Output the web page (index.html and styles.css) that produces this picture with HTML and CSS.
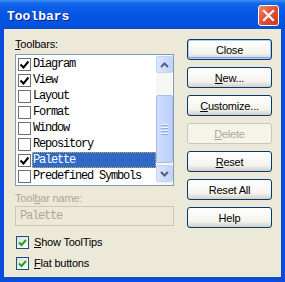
FILE: index.html
```html
<!DOCTYPE html>
<html lang="en">
<head>
  <meta charset="UTF-8" />
  <title>Toolbars</title>
  <link rel="stylesheet" href="styles.css">
</head>
<body>

<div class="window">
  <div class="titlebar">
    <span class="title">Toolbars</span>
    <button class="close-x" aria-label="Close">
      <svg width="13" height="13" viewBox="0 0 13 13"><path d="M2 2 L11 11 M11 2 L2 11" stroke="#fff" stroke-width="2.2" stroke-linecap="square"/></svg>
    </button>
  </div>

  <div class="body">
    <div class="left">
      <div class="label"><u>T</u>oolbars:</div>
      <div class="list">
        <ul class="items">
          <li><span class="box on"></span><span class="name">Diagram</span></li>
          <li><span class="box on"></span><span class="name">View</span></li>
          <li><span class="box"></span><span class="name">Layout</span></li>
          <li><span class="box"></span><span class="name">Format</span></li>
          <li><span class="box"></span><span class="name">Window</span></li>
          <li><span class="box"></span><span class="name">Repository</span></li>
          <li class="selected"><span class="box on"></span><span class="name">Palette</span></li>
          <li><span class="box"></span><span class="name">Predefined Symbols</span></li>
        </ul>
        <div class="scrollbar">
          <div class="arrow">
            <svg width="9" height="6" viewBox="0 0 9 6"><path d="M1 5 L4.5 1.5 L8 5" fill="none" stroke="#4d6185" stroke-width="2"/></svg>
          </div>
          <div class="track">
            <div class="thumb"><span></span><span></span><span></span><span></span></div>
          </div>
          <div class="arrow">
            <svg width="9" height="6" viewBox="0 0 9 6"><path d="M1 1 L4.5 4.5 L8 1" fill="none" stroke="#4d6185" stroke-width="2"/></svg>
          </div>
        </div>
      </div>

      <div class="label disabled">Tool<u>b</u>ar name:</div>
      <div class="namebox">Palette</div>

      <label class="check"><span class="xpbox"></span><span><u>S</u>how ToolTips</span></label>
      <label class="check"><span class="xpbox"></span><span><u>F</u>lat buttons</span></label>
    </div>

    <div class="right">
      <button class="btn default">Close</button>
      <button class="btn"><u>N</u>ew...</button>
      <button class="btn"><u>C</u>ustomize...</button>
      <button class="btn" disabled><u>D</u>elete</button>
      <button class="btn"><u>R</u>eset</button>
      <button class="btn">Reset All</button>
      <button class="btn">Help</button>
    </div>
  </div>
</div>

</body>
</html>
```

FILE: styles.css
```css
body {
  margin: 0;
  font-family: "Liberation Sans", Arial, sans-serif;
  font-size: 11px;
  letter-spacing: -0.2px;
}
.window {
  width: 285px;
  height: 282px;
  background: #0a4dd8;
  padding: 0 4px 5px 4px;
  box-sizing: border-box;
  display: flex;
  flex-direction: column;
}
.titlebar {
  height: 29px;
  margin: 0 -4px;
  background: linear-gradient(#3c8ef5 0%, #1467eb 12%, #0658e6 40%, #0451df 85%, #0a50cf 100%);
  display: flex;
  align-items: center;
  justify-content: space-between;
  padding: 0 6px 0 7px;
}
.title {
  color: white;
  font-family: "Liberation Mono", monospace;
  font-weight: bold;
  font-size: 13px;
  letter-spacing: 0;
  text-shadow: 1px 1px #0a1e8c;
  margin-top: 3px;
}
.close-x {
  width: 21px;
  height: 21px;
  padding: 0;
  border: 1px solid #fff;
  border-radius: 3px;
  background: linear-gradient(135deg, #f08a6c 0%, #e0553a 45%, #c7391c 100%);
  display: flex;
  align-items: center;
  justify-content: center;
  margin-top: 1px;
}
.body {
  flex: 1;
  background: #ece9d8;
  display: flex;
  gap: 13px;
  padding: 9px 0 0 11px;
}
.left {
  width: 159px;
  display: flex;
  flex-direction: column;
}
.label {
  line-height: 13px;
  margin-bottom: 3px;
}
.label.disabled {
  color: #aca899;
  margin-top: 6px;
  margin-bottom: 1px;
}
.list {
  height: 132px;
  border: 1px solid #7f9db9;
  background: white;
  display: flex;
  box-sizing: border-box;
}
.items {
  list-style: none;
  margin: 0;
  padding: 1px 0 0;
  flex: 1;
}
.items li {
  height: 16px;
  display: flex;
  align-items: center;
  padding-left: 2px;
  font-family: "Liberation Mono", monospace;
  font-size: 12px;
  letter-spacing: -1.2px;
}
.box {
  width: 11px;
  height: 11px;
  border: 1px solid #707070;
  background: white;
  margin-right: 1px;
  flex-shrink: 0;
  position: relative;
}
.box.on::after {
  content: "";
  position: absolute;
  left: 1px;
  top: 1px;
  width: 9px;
  height: 9px;
  background: url("data:image/svg+xml;utf8,<svg xmlns='http://www.w3.org/2000/svg' width='9' height='9'><path d='M0.5 4.5 L3.5 7.5 L8.5 1.5' fill='none' stroke='black' stroke-width='2'/></svg>");
}
.name {
  height: 16px;
  line-height: 16px;
  padding: 0 2px 0 1px;
}
.selected .name {
  flex: 1;
  background: #316ac5;
  color: white;
  outline: 1px dotted #c9b25a;
  outline-offset: -1px;
}
.scrollbar {
  width: 17px;
  display: flex;
  flex-direction: column;
  background: #f7f7f2;
  padding-bottom: 2px;
}
.arrow {
  height: 15px;
  margin: 1px 0;
  border: 1px solid #c3d2f7;
  border-radius: 2px;
  background: linear-gradient(to right, #dbe6fd, #c1d3fb);
  display: flex;
  align-items: center;
  justify-content: center;
}
.track {
  flex: 1;
  display: flex;
  flex-direction: column;
  padding: 21px 0 1px;
}
.thumb {
  flex: 1;
  border: 1px solid #a6bbee;
  border-radius: 2px;
  background: linear-gradient(to right, #cfdcfc, #bccffb);
  display: flex;
  flex-direction: column;
  align-items: center;
  justify-content: center;
  gap: 1px;
}
.thumb span {
  width: 7px;
  height: 1px;
  background: #eef3fe;
  border-bottom: 1px solid #8ca6e6;
}
.namebox {
  height: 20px;
  border: 1px solid #c9c7ba;
  box-sizing: border-box;
  font-family: "Liberation Mono", monospace;
  font-size: 12px;
  letter-spacing: -1.2px;
  color: #aca899;
  line-height: 18px;
  padding-left: 4px;
}
.check {
  display: flex;
  align-items: center;
  gap: 5px;
  height: 16px;
  margin-top: 5px;
  padding-left: 1px;
}
.check:first-of-type {
  margin-top: 8px;
}
.xpbox {
  width: 11px;
  height: 11px;
  border: 1px solid #1c5180;
  background: linear-gradient(135deg, #dcdcd7, #fff) ;
  position: relative;
}
.xpbox::after {
  content: "";
  position: absolute;
  left: 1px;
  top: 1px;
  width: 9px;
  height: 9px;
  background: url("data:image/svg+xml;utf8,<svg xmlns='http://www.w3.org/2000/svg' width='9' height='9'><path d='M1 4.5 L3.5 7 L8 2' fill='none' stroke='%2321a121' stroke-width='2'/></svg>");
}
.right {
  width: 85px;
  display: flex;
  flex-direction: column;
  gap: 7px;
  padding-top: 1px;
}
.btn {
  height: 21px;
  padding: 0;
  border: 1px solid #003c74;
  border-radius: 3px;
  background: linear-gradient(#ffffff, #f4f3ee 70%, #d6d0c5);
  font-family: "Liberation Sans", Arial, sans-serif;
  font-size: 11px;
  letter-spacing: -0.2px;
  color: black;
}
.btn.default {
  box-shadow: inset 0 0 0 1px #b6ccf2, inset 0 -1px 0 1px #7da2e8;
}
.btn:disabled {
  border-color: #c9c7ba;
  background: #f5f4ea;
  color: #aca899;
}
```
